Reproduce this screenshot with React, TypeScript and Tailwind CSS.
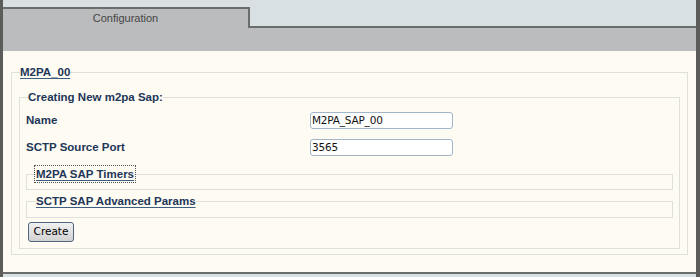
import React from "react";

const sans = { fontFamily: '"Liberation Sans", Arial, sans-serif' };
const deja = { fontFamily: '"DejaVu Sans", Verdana, sans-serif' };

function Legend({
  children,
  focus,
  plain,
  className = "",
}: {
  children: React.ReactNode;
  focus?: boolean;
  plain?: boolean;
  className?: string;
}) {
  return (
    <legend
      className={`text-[11.5px] leading-[14px] font-bold text-[#1d3658] ${
        plain ? "" : "underline decoration-[#3d5e80] underline-offset-2"
      } ${focus ? "outline outline-1 outline-dotted outline-[#555] outline-offset-1" : ""} ${className}`}
    >
      {children}
    </legend>
  );
}

function Row({ label, value }: { label: string; value: string }) {
  return (
    <div className="flex h-[27px] items-center">
      <div className="w-[284px] text-[11.5px] font-bold text-[#1d3658]">{label}</div>
      <div
        style={deja}
        className="flex h-[17px] w-[143px] items-center rounded-[3px] border border-[#a3b5c9] bg-white pl-[1px] text-[10.5px] leading-[15px] tracking-[-0.2px] text-[#111]"
      >
        {value}
      </div>
    </div>
  );
}

export default function App() {
  return (
    <div style={sans} className="flex h-[277px] w-[700px] bg-[#5c5d5a] pl-[3px] pr-[4px]">
      <div className="flex flex-1 flex-col bg-[#fdfbf2]">
        {/* tab strip */}
        <div className="flex h-[28px] bg-[#d9e0e3]">
          <div className="mt-[7px] flex w-[247px] justify-center border-r-2 border-t-2 border-[#6b6d6d] bg-[#bbbcbe] pt-[1px] text-[11px] text-[#454545]">
            Configuration
          </div>
          <div className="flex-1 border-b-2 border-[#6b6d6d]" />
        </div>
        <div className="h-[23px] bg-[#bbbcbe]" />

        <div className="flex-1 px-[8px] pt-[14px]">
          <fieldset className="border border-[#e0e0da] px-[7px] pb-[5px]">
            <Legend className="ml-[1px]">M2PA_00</Legend>
            <fieldset className="mt-[11px] border border-[#e0e0da] px-[6px] pb-[6px]">
              <Legend plain className="ml-[2px]">Creating New m2pa Sap:</Legend>
              <div className="mt-[3px]">
                <Row label="Name" value="M2PA_SAP_00" />
                <Row label="SCTP Source Port" value="3565" />
              </div>
              <fieldset className="mt-[6px] border border-[#e0e0da] pb-[8px]">
                <Legend focus className="ml-[9px]">M2PA SAP Timers</Legend>
              </fieldset>
              <fieldset className="mt-[4px] border border-[#e0e0da] pb-[9px]">
                <Legend className="ml-[9px]">SCTP SAP Advanced Params</Legend>
              </fieldset>
              <button
                style={deja}
                className="ml-[2px] mt-[1px] h-[20px] w-[46px] rounded-[3px] border border-[#4f6680] bg-gradient-to-b from-[#f0f0f0] to-[#d2d2d2] text-[10.5px] text-black"
              >
                Create
              </button>
            </fieldset>
          </fieldset>
        </div>

        <div className="h-[5px] border-t-2 border-[#6b6d6d] bg-[#d9e0e3]" />
      </div>
    </div>
  );
}
